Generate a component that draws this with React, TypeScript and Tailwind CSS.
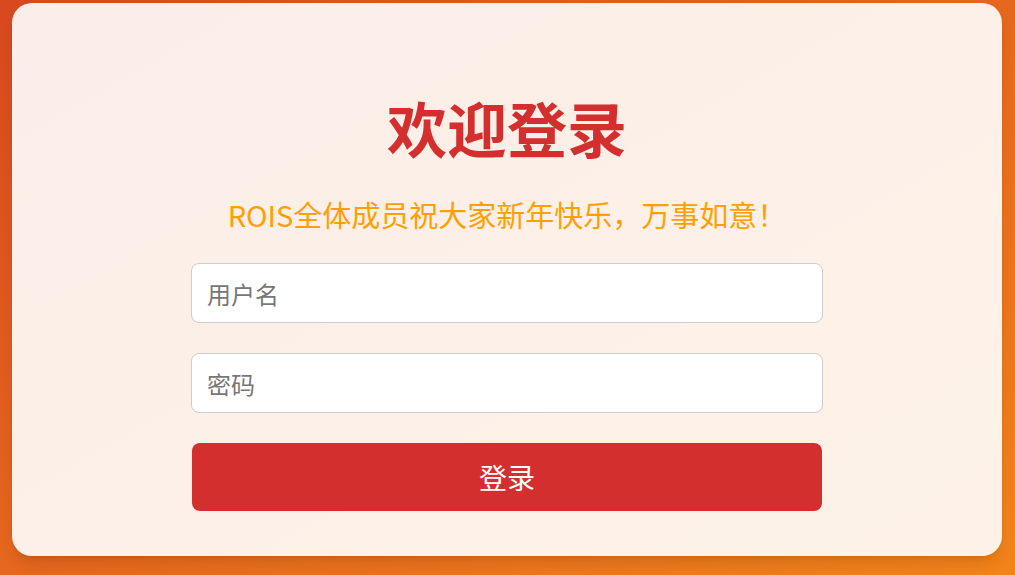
import React from 'react';

const App: React.FC = () => {
  return (
    <div
      className="w-full h-[575px] overflow-hidden bg-gradient-to-br from-[#d8481f] to-[#f2831a] pl-[12px] pt-[3px]"
      style={{ fontFamily: '"Noto Sans CJK SC", "Noto Sans", "Liberation Sans", sans-serif' }}
    >
      <div className="w-[990px] h-[553px] rounded-[20px] bg-white/90 shadow-lg flex flex-col items-center pt-[82px]">
        <h1 className="text-[60px] leading-[84px] font-bold text-[#d32f2f]">欢迎登录</h1>
        <p className="mt-[25px] text-[29px] leading-[40px] text-[#ffa000]">ROIS全体成员祝大家新年快乐，万事如意！</p>
        <form className="mt-[29px] w-[632px] flex flex-col gap-[30px]" onSubmit={e => e.preventDefault()}>
          <input
            type="text"
            placeholder="用户名"
            className="h-[60px] w-full rounded-[8px] border border-[#cccccc] bg-white px-[15px] text-[24px] text-[#333] placeholder:text-[#777] outline-none"
          />
          <input
            type="password"
            placeholder="密码"
            className="h-[60px] w-full rounded-[8px] border border-[#cccccc] bg-white px-[15px] text-[24px] text-[#333] placeholder:text-[#777] outline-none"
          />
          <button
            type="submit"
            className="h-[68px] mx-[1px] rounded-[8px] bg-[#d32f2f] text-white text-[28px]"
          >
            登录
          </button>
        </form>
      </div>
    </div>
  );
};

export default App;
